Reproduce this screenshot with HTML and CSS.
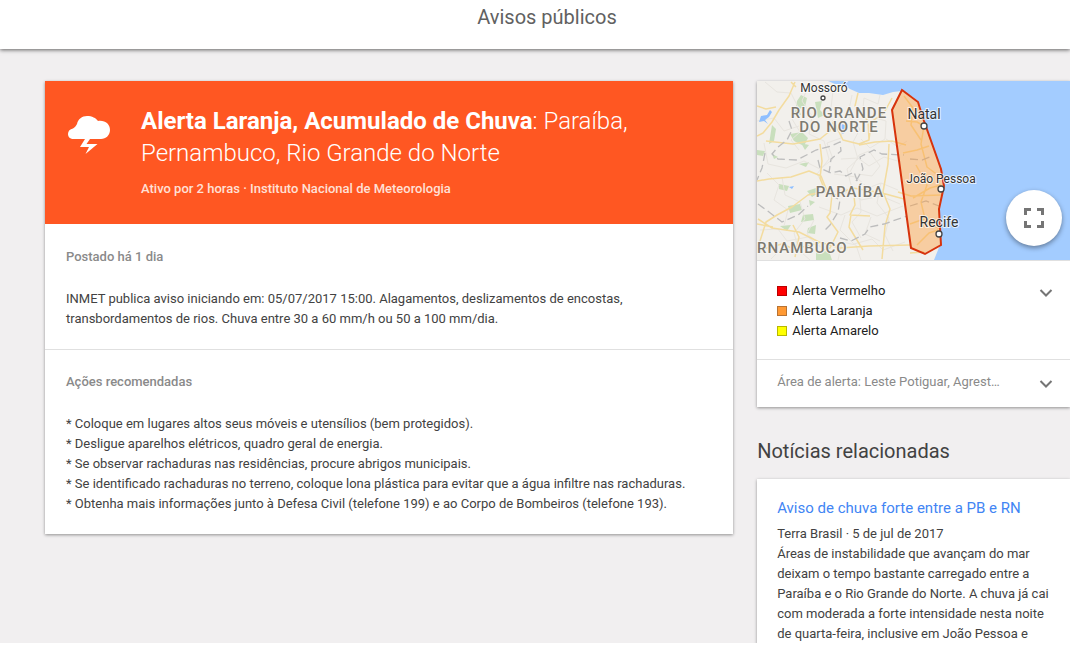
FILE: index.html
```html
<!DOCTYPE html>
<html lang="pt-BR">
<head>
<meta charset="utf-8">
<title>Avisos públicos</title>
<link rel="stylesheet" href="styles.css">
</head>
<body>
<div class="page">
  <header class="topbar"><h1 class="topbar-title">Avisos públicos</h1></header>
  <main class="content">
    <article class="card alert">
      <header class="alert-head">
        <svg class="alert-icon" viewBox="0 0 44 40" aria-hidden="true">
          <path fill="#fff" d="M7 24C3 24 1 22 1 19C1 16 3 14 6 13.500C8 12 9 11 10 9C11 4 15 1 20 1C25 1 29 3 31 6C38 5 43 9 43 15C43 20 39 24 34 24H23L19.500 29H30.500L18.500 39L22 32H13L18 24Z"/>
        </svg>
        <div class="alert-text">
          <h2 class="alert-title"><strong>Alerta Laranja, Acumulado de Chuva</strong>: Paraíba, Pernambuco, Rio Grande do Norte</h2>
          <p class="alert-meta">Ativo por 2 horas · Instituto Nacional de Meteorologia</p>
        </div>
      </header>
      <section class="block">
        <h3 class="block-title">Postado há 1 dia</h3>
        <p class="block-text">INMET publica aviso iniciando em: 05/07/2017 15:00. Alagamentos, deslizamentos de encostas, transbordamentos de rios. Chuva entre 30 a 60 mm/h ou 50 a 100 mm/dia.</p>
      </section>
      <section class="block">
        <h3 class="block-title">Ações recomendadas</h3>
        <p class="block-text">* Coloque em lugares altos seus móveis e utensílios (bem protegidos).<br>* Desligue aparelhos elétricos, quadro geral de energia.<br>* Se observar rachaduras nas residências, procure abrigos municipais.<br>* Se identificado rachaduras no terreno, coloque lona plástica para evitar que a água infiltre nas rachaduras.<br>* Obtenha mais informações junto à Defesa Civil (telefone 199) e ao Corpo de Bombeiros (telefone 193).</p>
      </section>
    </article>
    <aside class="side">
      <section class="card">
        <div class="map">
          <svg class="map-art" viewBox="0 -1 313 179" preserveAspectRatio="xMinYMin slice" role="img" aria-label="Mapa da área de alerta">
            <rect y="-1" width="1200" height="179" fill="#a3ccff"/>
            <path fill="#f2f0ec" d="M0 -1H71L78 2L85 2L93 7L102 11L112 11L126 13L136 10L145 9L156 15L163 23L169 44L178 70L184 90L186 103L183 120L182 140L184 160L181 168L177 178H0Z"/>
            <g fill="#c9dfbd">
              <path d="M44 13l6 3-2 9-6 2 2 6-6-2 2-12zM58 20l7-1-2 9 5 5-7 3zM15 43l4 4-2 12-5 3zM33 52l12-2 6 6-4 8-10-5zM44 61l8 2-4 5zM0 68l8 1-2 5-6-1zM22 102l10 2-2 5-8-2zM50 109l9-3 4 4-8 5zM31 124l12-2 2 6-12 3zM52 118l6 2-5 4zM46 133l10-1 1 6-13 2zM23 144l11-1-4 6zM51 146l8-3-1 9-8-1zM59 170l13-1 3 9H59zM15 72l6 3-4 2zM42 82l10-2-3 5z"/>
            </g>
            <g class="map-local">
              <path d="M8 0l12 10 14 1 8 16-7 10 8 13-9 8 8 10M53 0l-8 19 10 15-3 18 15 7 5 18-12 15 7 12M76 9l-2 17 13 10-3 20-14 5 6 16-13 10M95 13l-4 20 12 14-7 13 5 17-11 10 5 20-13 8M112 34l17 5-1 18-15 9-9-9M129 57l12 8 9-6M84 77l17-1 11 8 15-9 17 5M77 92l22 3 12 11 13-5 17 7M66 111l24-4 14 11 20-4 19 8M62 125l22 8 16-7 20 8 26-10M88 133l-5 15 14 14 18-5 11 11 22-8M10 91l12 12-5 15 14 10-4 16M25 95l3 18 15 7 5 17-11 14 5 18M3 148l18-1 9 12 21-4 14 11M14 177l11-11 20 5 8 7M81 178l4-18 14 3 5 15M0 39l17-3 10 13 15-5M7 61l4 21 18 4 18-7 16 8M93 90l9-17 10-4 11 15-8 10-14-2M102 106l2 24-9 10 9 16M124 101l-4 20 12 15-4 17 8 16M105 36l2-20 14 6 2-9M57 138l-7 14 12 9M114 135l-6 17 15 7"/>
            </g>
            <g class="map-road">
              <path d="M38 0l-6 14-10 14-7 12-9 11-6 3M0 24l9 3 10-2M9 59l27 3 27-5 10-8 3-9M63 62l2 17-2 17 5 13 10 4 18-7 29 5 22 6M76 38l10 20 16 4 10-4 2-18 13-9 8-15M102 63l16-3 17-1 14 4M112 58l-1-19-13-15 3-13M0 99l12-2 22-2 18-6 12 5 6 15-19 4-16 12-15 8-11 7-6 19M1 137l14 9 27 4 20 10 21 6 29-2 41-1M0 142l16 3M34 0l5 5M36 143l6 12-4 20M96 106l2 17-5 10 20 1M94 133l-2 12 14 23M132 62l-1 20-5 28 7 17-5 17-3 33M75 113l-2 18-3 4 11 15-8 16-10 3M141 110l13 4 30-1M149 39l11 1 7 4-3 18 6 23 12 9M146 71l14-3 12-4M159 83l11 20-6 17 4 17 14 10M147 14l9 12-2 17 10 15M156 116l17-10 11-3M153 142l14-5 15 2M160 163l12-12 9-3M153 171l14-1M2 168l23-6 12 5 25-6"/>
            </g>
            <g class="map-border">
              <path d="M32 39l3 9-5 10-9 7-6 7 6 5 19 1 19-10 15-4 9-4 1 9-10 8-2 14M61 78l2 8 11 5 9-2 6 5 8-4 4 11M99 99l7-12-3-12 14-7 8 4 22 1M8 71l-3 15-5 12M1 122l11 8 13 10 16-7 10-9M74 113l9 5-2 12-8 13-6 6M83 156l11 3 14-7 5-7 14-3 23-8M153 77l12 1 10-4M153 124l16-5 13 5"/>
            </g>
            <path fill="#8fbfff" d="M4 34l6-1 3-5 2 2-3 5-4 3 3 4-4-3-5 1zM84 42l4 1 1 5-3 4-4-4zM32 105l5-1-2 3z"/>
            <path class="map-area" d="M145 8L135 28L154 166L168 172L184 163L182 127L187 104L184 87L167 39L161 20Z"/>
            <g class="map-region">
              <text x="82" y="36" text-anchor="middle">RIO GRANDE</text>
              <text x="82" y="50" text-anchor="middle">DO NORTE</text>
              <text x="93" y="115" text-anchor="middle">PARAÍBA</text>
              <text x="0" y="171">RNAMBUCO</text>
            </g>
            <g class="map-dot">
              <circle cx="66" cy="16" r="2"/><circle cx="167" cy="44" r="3"/><circle cx="184" cy="107" r="3"/><circle cx="182" cy="152" r="3"/>
            </g>
            <g class="map-city">
              <text x="67" y="10" text-anchor="middle" class="map-city-small">Mossoró</text>
              <text x="167" y="37" text-anchor="middle">Natal</text>
              <text x="184" y="101" text-anchor="middle" class="map-city-medium">João Pessoa</text>
              <text x="182" y="145" text-anchor="middle">Recife</text>
            </g>
          </svg>
          <button class="map-expand" type="button" aria-label="Tela cheia">
            <svg width="20" height="20" viewBox="0 0 20 20" fill="none" stroke="#757575" stroke-width="3" aria-hidden="true"><path d="M1.500 7V1.500H7M13 1.500h5.500V7M18.500 13v5.500H13M7 18.500H1.500V13"/></svg>
          </button>
        </div>
        <div class="row legend">
          <ul class="legend-list">
            <li><span class="swatch swatch-red"></span>Alerta Vermelho</li>
            <li><span class="swatch swatch-orange"></span>Alerta Laranja</li>
            <li><span class="swatch swatch-yellow"></span>Alerta Amarelo</li>
          </ul>
          <button class="chevron" type="button" aria-label="Expandir legenda"><svg width="14" height="10" viewBox="0 0 14 10" aria-hidden="true"><path d="M1.500 2L7 7.500L12.500 2"/></svg></button>
        </div>
        <div class="row area">
          <p class="area-text">Área de alerta: Leste Potiguar, Agrest…</p>
          <button class="chevron" type="button" aria-label="Expandir área de alerta"><svg width="14" height="10" viewBox="0 0 14 10" aria-hidden="true"><path d="M1.500 2L7 7.500L12.500 2"/></svg></button>
        </div>
      </section>
      <h2 class="side-title">Notícias relacionadas</h2>
      <section class="card news">
        <h3 class="news-title"><a href="#">Aviso de chuva forte entre a PB e RN</a></h3>
        <p class="news-text">Terra Brasil · 5 de jul de 2017</p>
        <p class="news-text">Áreas de instabilidade que avançam do mar deixam o tempo bastante carregado entre a Paraíba e o Rio Grande do Norte. A chuva já cai com moderada a forte intensidade nesta noite de quarta-feira, inclusive em João Pessoa e</p>
      </section>
    </aside>
  </main>
</div>
</body>
</html>
```
FILE: styles.css
```css
* { box-sizing: border-box; }
body, h1, h2, h3, p, ul { margin: 0; padding: 0; }
body {
  background: #fff;
  color: #424242;
  font: 13px/20px Roboto, sans-serif;
}
button { border: 0; padding: 0; background: none; cursor: pointer; }

.page {
  display: flex;
  flex-direction: column;
  height: calc(100vh - 7px);
  overflow: hidden;
  background: #f1eff0;
}
.topbar {
  flex: none;
  padding: 5px 0 20px 24px;
  background: #fff;
  box-shadow: 0 1px 4px rgba(0, 0, 0, 0.6);
  text-align: center;
}
.topbar-title { font-size: 20px; line-height: 24px; font-weight: 400; color: #616161; }

.content {
  flex: 1;
  display: grid;
  grid-template-columns: minmax(0, 11fr) minmax(0, 5fr);
  gap: 24px;
  padding: 32px 0 0 45px;
}
.card { background: #fff; box-shadow: 0 1px 3px rgba(0, 0, 0, 0.4); }

.alert { align-self: start; }
.alert-head {
  display: flex;
  gap: 30px;
  padding: 24px 88px 25px 22px;
  background: #ff5722;
  color: #fff;
}
.alert-icon { flex: none; width: 44px; height: 40px; margin-top: 10px; }
.alert-title { font-size: 24px; line-height: 32px; font-weight: 300; }
.alert-title strong { font-weight: 700; }
.alert-meta { margin-top: 10px; font-weight: 500; color: #ffe0d6; }

.block { padding: 23px 21px 20px; }
.block + .block { padding-top: 22px; border-top: 1px solid #e0e0e0; }
.block-title { font-size: 13px; font-weight: 500; color: #8a8a8a; }
.block-text { margin-top: 22px; }

.side { display: flex; flex-direction: column; }
.map { position: relative; height: 180px; border-bottom: 1px solid #e0e0e0; }
.map-art { display: block; width: 100%; height: 179px; }
.map-local { fill: none; stroke: #e8e5df; stroke-width: 1; }
.map-road { fill: none; stroke: #f3dc9f; stroke-width: 1.5; stroke-linejoin: round; }
.map-border { fill: none; stroke: #bdbdbd; stroke-width: 1.3; stroke-dasharray: 8 4; }
.map-area { fill: #ff9933; fill-opacity: 0.4; stroke: #d7330c; stroke-width: 2; }
.map-region text {
  font-size: 15px;
  font-weight: 500;
  letter-spacing: 1px;
  fill: #7d7a70;
  stroke: #f7f5f2;
  stroke-width: 2;
  paint-order: stroke;
}
.map-city text {
  font-size: 14px;
  font-weight: 400;
  fill: #333;
  stroke: #fff;
  stroke-opacity: 0.7;
  stroke-width: 2;
  paint-order: stroke;
}
.map-city .map-city-small { font-size: 12px; }
.map-city .map-city-medium { font-size: 12px; }
.map-dot { fill: #fff; stroke: #444; stroke-width: 1.3; }
.map-expand {
  position: absolute;
  right: 8px;
  bottom: 14px;
  display: grid;
  place-items: center;
  width: 56px;
  height: 56px;
  border-radius: 50%;
  background: #fff;
  box-shadow: 0 2px 5px rgba(0, 0, 0, 0.4);
}

.row { display: flex; justify-content: space-between; align-items: flex-start; padding: 20px 17px 18px 20px; }
.legend-list { list-style: none; color: #212121; }
.legend-list li { display: flex; align-items: center; gap: 5px; }
.swatch { width: 10px; height: 10px; border: 1px solid; }
.swatch-red { background: #f00; border-color: #b00; }
.swatch-orange { background: #f93; border-color: #b87333; }
.swatch-yellow { background: #ff0; border-color: #b8b800; }
.chevron { display: grid; place-items: center; width: 14px; height: 24px; }
.chevron path { fill: none; stroke: #757575; stroke-width: 2; }
.area { padding-top: 12px; padding-bottom: 11px; border-top: 1px solid #e0e0e0; }
.area-text { color: #8a8a8a; }

.side-title { margin: 32px 0 16px; font-size: 20px; line-height: 24px; font-weight: 400; color: #424242; }
.news { flex: 1; padding: 19px 20px 0; }
.news-title { margin-bottom: 6px; font-size: 15px; line-height: 20px; font-weight: 400; }
.news-title a { color: #4285f4; text-decoration: none; }
```
